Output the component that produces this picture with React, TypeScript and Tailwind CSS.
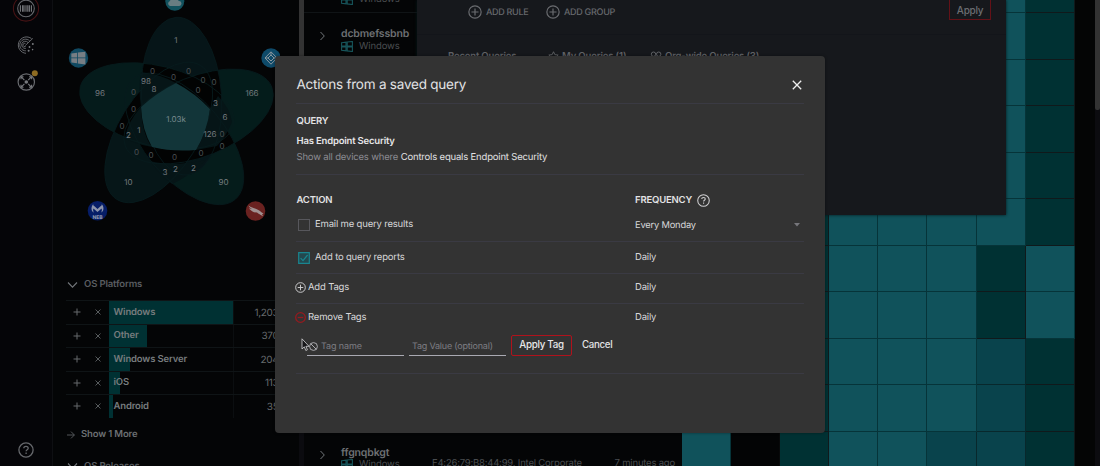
import React from "react";

const shades = {
  T: "bg-[#10525b] border-[#063439]",
  M: "bg-[#09434c] border-[#08282c]",
  D: "bg-[#003133] border-[#10191b]",
  K: "bg-[#030405] border-[#08090a]",
};
type Shade = keyof typeof shades;

const heat = [
  "KKDTTTTD",
  "KKDTTTTD",
  "KKDTTTTD",
  "KKDTTTTD",
  "KKDTTTTD",
  "KKDTTTTD",
  "KKDTTTDT",
  "KKDTTTDT",
  "KKDTTTMD",
  "KKDTTTMD",
  "TKDTTMMD",
];

const devices: Record<number, { name: string; mac: string; seen: string }> = {
  0: { name: "", mac: "", seen: "" },
  1: { name: "dcbmefssbnb", mac: "", seen: "" },
  10: { name: "ffgnqbkgt", mac: "F4:26:79:B8:44:99, Intel Corporate", seen: "7 minutes ago" },
};

const platforms = [
  { name: "Windows", count: "1,203", width: 124.5 },
  { name: "Other", count: "370", width: 38 },
  { name: "Windows Server", count: "204", width: 21 },
  { name: "iOS", count: "113", width: 11.5 },
  { name: "Android", count: "35", width: 4 },
];

function WinOutline() {
  return (
    <svg width="12" height="11" viewBox="0 0 12 11" fill="none" stroke="#17555b" strokeWidth="1.1">
      <path d="M.6 1.8 5 1.2V5H.6zM6.2 1 11.4.5V5H6.2zM.6 6H5v3.8L.6 9.2zM6.2 6h5.2v4.5l-5.2-.6z" />
    </svg>
  );
}

function Chevron({ className }: { className: string }) {
  return (
    <svg className={className} viewBox="0 0 10 6" fill="none" stroke="#72767a" strokeWidth="1.1">
      <path d="M.5.5 5 5.2 9.5.5" />
    </svg>
  );
}

function CirclePlus({ color, size, minus }: { color: string; size: number; minus?: boolean }) {
  return (
    <svg width={size} height={size} viewBox="0 0 13 13" fill="none" stroke={color} strokeWidth={minus ? 1.5 : 1.1}>
      <circle cx="6.5" cy="6.5" r="5.7" />
      <path d={minus ? "M3.2 6.5h6.6" : "M3.2 6.5h6.6M6.5 3.2v6.6"} />
    </svg>
  );
}

function Help({ color, size }: { color: string; size: number }) {
  return (
    <svg width={size} height={size} viewBox="0 0 16 16" fill="none" stroke={color} strokeWidth="1.3">
      <circle cx="8" cy="8" r="7.1" />
      <path d="M5.8 6.3c0-1.3 1-2 2.2-2s2.2.7 2.2 1.9c0 1.5-2.1 1.5-2.1 3.1" />
      <path d="M8.1 10.6v1.5" />
    </svg>
  );
}

function Rail() {
  return (
    <nav className="flex h-[466px] w-[53px] shrink-0 flex-col items-center border-r border-[#0e0f12] bg-[#050508]">
      <svg className="-mt-[6px] shrink-0" width="28" height="28" viewBox="0 0 28 28" fill="none">
        <circle cx="14" cy="14.5" r="12.6" stroke="#461315" strokeWidth="1.1" />
        <circle cx="14" cy="14.5" r="8.3" stroke="#65676b" strokeWidth="1.1" />
        <path d="M8.4 11.3v6.4M10.6 11.3v6.4M12 11.3v6.4M14 11.3v6.4M15.8 11.3v6.4M17.4 11.3v6.4M19.4 11.3v6.4" stroke="#77797d" strokeWidth="1.1" />
      </svg>
      <svg className="mt-[13px] shrink-0" width="20" height="20" viewBox="0 0 20 20" fill="none" stroke="#65676b" strokeWidth="1">
        <path d="M15.5 3.6A8.2 8.2 0 1 0 10 18.3M13.6 5.8a5.8 5.8 0 1 0-3.8 10M12 7.5a3.6 3.6 0 1 0-2.2 5.9M9.5 10.3l7.3-6.9M9.4 8.6a1.6 1.6 0 1 0 .5 2.2" />
        <g fill="#77797d" stroke="none">
          <circle cx="16.8" cy="9" r="1" />
          <circle cx="13.5" cy="12" r=".9" />
          <circle cx="12.6" cy="15.8" r="1" />
          <circle cx="16.6" cy="14.6" r=".8" />
        </g>
      </svg>
      <svg className="mt-[14px] shrink-0" width="26" height="24" viewBox="0 0 26 24" fill="none">
        <circle cx="13.3" cy="13" r="8.2" stroke="#696b6f" strokeWidth="1.2" />
        <circle cx="13.3" cy="13" r="1.8" fill="#77797d" />
        <path d="M8.5 8.2l2.9 2.9M18.1 8.2l-2.9 2.9M8.5 17.8l2.9-2.9M18.1 17.8l-2.9-2.9M8 10.3V7.8h2.5M16.1 7.8h2.5v2.5M8 15.7v2.5h2.5M16.1 18.2h2.5v-2.5" stroke="#77797d" strokeWidth="1.1" />
        <circle cx="21.8" cy="4.2" r="3" fill="#8d6b22" />
      </svg>
      <div className="mt-auto mb-[8px]">
        <Help color="#66686c" size={16} />
      </div>
    </nav>
  );
}

const labels: [number, number, string, boolean?][] = [
  [176, 40, "1", true], [100, 93.5, "96", true], [252, 93.5, "166", true], [128.5, 182, "10", true], [223.5, 182, "90", true],
  [146, 81, "98", true], [154, 89, "8", true], [215.5, 103.5, "3", true], [225, 117.5, "6", true], [210, 134.5, "126", true],
  [139, 130, "1", true], [128.5, 135.5, "2", true], [165, 172.5, "3", true], [175.5, 169, "2", true], [193.5, 168, "2", true],
  [152.5, 71.5, "0"], [173.5, 77.5, "0"], [188.5, 71.5, "0"], [203, 80, "0"], [214, 82.5, "0"], [198, 90.5, "0"],
  [133.5, 92, "0"], [133.5, 109, "0"], [122, 126.5, "0"], [222, 134.5, "0"], [222, 146, "0"], [201, 153.5, "0"],
  [174.5, 157.5, "0"], [151, 155.5, "0"], [136.5, 152, "0"],
];

const petalFills = ["#041c1b", "#051c1b", "#061618", "#051b1b", "#061518"];

function Venn() {
  return (
    <svg className="block shrink-0" width="222" height="232" viewBox="58 0 222 232">
      <defs>
        {petalFills.map((_, i) => (
          <clipPath key={i} id={`petal${i}`}>
            <ellipse cx="198.5" cy="116.5" rx="79" ry="40" transform={`rotate(${i * 72} 176 118) rotate(-22 198.5 116.5)`} />
          </clipPath>
        ))}
      </defs>
      {petalFills.map((fill, i) => (
        <ellipse key={i} cx="198.5" cy="116.5" rx="79" ry="40" fill={fill} transform={`rotate(${i * 72} 176 118) rotate(-22 198.5 116.5)`} />
      ))}
      {petalFills.map((_, i) => (
        <g key={i} clipPath={`url(#petal${i})`}>
          <ellipse cx="198.5" cy="116.5" rx="79" ry="40" fill="#020303" transform={`rotate(${((i + 1) % 5) * 72} 176 118) rotate(-22 198.5 116.5)`} />
        </g>
      ))}
      <path d="M141 72Q160 74 176 83L141 107Q138 88 141 72zM210 109L218 96Q230 108 232 122Q226 137 217 146L196 150Q207 132 210 109zM141 107Q142 134 152 147Q134 144 125 138Q128 121 141 107zM150 161Q172 167 206 160Q190 176 172 184Q158 174 150 161z" fill="#061517" />
      {petalFills.map((_, i) => (
        <ellipse key={i} cx="198.5" cy="116.5" rx="79" ry="40" fill="none" stroke="#071b1d" strokeWidth=".8" transform={`rotate(${i * 72} 176 118) rotate(-22 198.5 116.5)`} />
      ))}
      <path d="M176 83Q195 93 210 109Q207 132 196 150Q172 152 152 147Q142 130 141 107Q156 93 176 83z" fill="#123539" />
      {labels.map(([x, y, t, strong], i) => (
        <text key={i} x={x} y={y + 2.9} textAnchor="middle" className="font-['Inter',sans-serif] text-[8px]" fill={strong ? "#777c80" : "#4b5053"}>
          {t}
        </text>
      ))}
      <text x="176" y="122" textAnchor="middle" className="font-['Inter',sans-serif] text-[8px]" fill="#7b8c90">1.03k</text>
      <circle cx="174.8" cy="1.2" r="9.5" fill="#12525e" />
      <path d="M170 6a2.6 2.6 0 0 1 0-5q1-4 5-3.4 3 .4 3.5 3.4a2.5 2.5 0 0 1 .8 5z" fill="#687d82" />
      <circle cx="78.5" cy="58" r="9.7" fill="#104961" />
      <path d="M71.3 53.5 77 52.8v4.7h-5.7zM77.8 52.6l7.6-.9v5.8h-7.6zM71.3 58.3H77v5l-5.7-.7zM77.8 58.3h7.6v6.2l-7.6-1z" fill="#777e84" />
      <circle cx="271" cy="58" r="9.7" fill="#0e4a69" />
      <path d="M271 51.8l6 6.2-6 6.2-6-6.2zM271 55l3 3-3 3-3-3zM265 58h3M274 58h3M271 52v3" stroke="#8a969e" strokeWidth="1" fill="none" />
      <circle cx="97.5" cy="210.8" r="9.8" fill="#061d67" />
      <path d="M94 212.500c-3-1-3.300-5.500-.8-8.300.2 1.300.5 1.700 1.300 2l3 2.800 3-2.800c.8-.3 1.100-.7 1.300-2 2.500 2.800 2.200 7.300-.8 8.300 1-1.200 1-2.800.6-4.100l-4.100 3.600-4.100-3.600c-.4 1.300-.4 2.900.6 4.100z" fill="#8b93ab" />
      <text x="97.5" y="219" textAnchor="middle" className="font-['Inter',sans-serif] text-[5px] font-extrabold" fill="#8b93ab">NEB</text>
      <circle cx="255.5" cy="211" r="9.8" fill="#6a2220" />
      <path d="M248.500 205.500c4 3 9 3 11.500 5.500 1 1.200 2.500 1.700 3.500 2.500l-1.500.7 1.200 2c-3-1.300-4.600-2.400-6.200-3.700l-3-.3c-2-1-4-2-5-3.900l3 .8c-1.700-1-3-2-3.500-3.600z" fill="#a09090" />
    </svg>
  );
}

function Facets() {
  return (
    <aside className="flex h-[466px] w-[246px] shrink-0 flex-col overflow-hidden bg-[#040506] pl-[5px]">
      <Venn />
      <div className="mt-[43px] flex h-[20px] shrink-0 items-center gap-[6px] pl-[9px]">
        <Chevron className="h-[6px] w-[11px]" />
        <h3 className="pt-px text-[9.5px] font-semibold tracking-[-0.15px] text-[#5a5d61]">OS Platforms</h3>
      </div>
      <div className="mt-[5px] ml-[8px] shrink-0">
        {platforms.map((p) => (
          <div key={p.name} className="flex h-[23.55px] items-center border-t border-[#0f1416]">
            <span className="flex w-[21px] justify-center">
              <svg width="8" height="8" viewBox="0 0 8 8" stroke="#666a6d"><path d="M.5 4h7M4 .5v7" /></svg>
            </span>
            <span className="flex w-[21.5px] justify-center">
              <svg width="6" height="6" viewBox="0 0 6 6" stroke="#606467" strokeWidth=".9"><path d="M.5.5l5 5M5.500.5l-5 5" /></svg>
            </span>
            <span className="grid h-full w-[125px] items-center border-r border-[#0b0e10]">
              <span className="col-start-1 row-start-1 h-full bg-[#003133]" style={{ width: p.width }} />
              <span className="col-start-1 row-start-1 pt-px pl-[5px] text-[9.5px] font-semibold tracking-[-0.15px] whitespace-nowrap text-[#777c7e]">{p.name}</span>
            </span>
            <span className="w-[45px] pt-[2px] text-right text-[10px] tracking-[-0.3px] text-[#666a6d]">{p.count}</span>
          </div>
        ))}
      </div>
      <div className="mt-[7px] flex h-[20px] shrink-0 items-center gap-[6px] pl-[9px]">
        <svg width="8" height="8" viewBox="0 0 8 8" fill="none" stroke="#5c6063" strokeWidth=".9"><path d="M0 4h7.300M4 .6 7.400 4 4 7.400" /></svg>
        <span className="text-[9.5px] font-semibold tracking-[-0.15px] text-[#6c7073]">Show 1 More</span>
      </div>
      <div className="mt-[11px] flex h-[20px] shrink-0 items-center gap-[6px] pl-[9px]">
        <Chevron className="h-[6px] w-[11px]" />
        <h3 className="pt-[2px] text-[9.5px] font-semibold tracking-[-0.15px] text-[#5a5d61]">OS Releases</h3>
      </div>
    </aside>
  );
}

function DeviceTable() {
  return (
    <main className="-mt-[33.5px] flex w-[771px] shrink-0 flex-col">
      {heat.map((line, r) => {
        const d = devices[r];
        return (
          <div key={r} className="flex h-[46.5px] shrink-0">
            <div className="flex w-[378px] shrink-0 border-b border-[#101416] pl-[16px]">
              {d && (
                <>
                  <svg className="mt-[18px] shrink-0" width="5" height="10" viewBox="0 0 5 10" fill="none" stroke="#72767a"><path d="M.5 1 4.300 5 .5 9" /></svg>
                  <div className="ml-[16px] w-[91px] shrink-0 pt-[14px]">
                    <div className="h-[13px] text-[10.5px] leading-[13px] font-semibold tracking-[-0.15px] text-[#6d7073]">{d.name}</div>
                    <div className="flex h-[12px] items-center gap-[6px] text-[9.5px] leading-[12px] tracking-[-0.1px] text-[#4a4d50]">
                      <WinOutline />
                      <span className="pt-px">Windows</span>
                    </div>
                  </div>
                  <div className="flex w-[243px] shrink-0 justify-between pt-[26px] text-[9.5px] leading-[12px] tracking-[-0.2px] whitespace-nowrap text-[#4a4d50]">
                    <span>{d.mac}</span>
                    <span>{d.seen}</span>
                  </div>
                </>
              )}
            </div>
            {line.split("").map((s, c) => (
              <div key={c} className={"w-[49.1px] shrink-0 border-r border-b " + shades[s as Shade]} />
            ))}
          </div>
        );
      })}
    </main>
  );
}

function QueryWizard() {
  return (
    <section className="absolute top-0 left-[417px] h-[214.5px] w-[589px] overflow-hidden bg-[#16181c] shadow-[0_0_3px_#03181b]">
      <div className="flex h-[35px] items-start border-b border-[#13151a] pl-[51px] text-[9px] font-medium tracking-[-0.3px] text-[#66686c]">
        <div className="flex h-[24px] w-[78px] items-center gap-[4px]">
          <CirclePlus color="#6a6c70" size={14} />
          <span className="pt-[2px]">ADD RULE</span>
        </div>
        <div className="flex h-[24px] items-center gap-[4px]">
          <CirclePlus color="#6a6c70" size={14} />
          <span className="pt-[2px]">ADD GROUP</span>
        </div>
        <button className="-mt-[2px] mr-[15px] ml-auto h-[22px] w-[42px] border border-[#641117] pt-[2px] text-[10px] text-[#6c6e72]">Apply</button>
      </div>
      <div className="flex h-[42px] items-center pl-[31px] text-[9.5px] font-semibold tracking-[-0.15px] text-[#606266]">
        <span className="w-[100px] pt-[2px]">Recent Queries</span>
        <svg width="11" height="11" viewBox="0 0 12 12" fill="none" stroke="#606266"><path d="M6 .8 7.500 4l3.600.4-2.700 2.400.8 3.600L6 8.600l-3.200 1.800.8-3.600L.9 4.400 4.500 4z" /></svg>
        <span className="ml-[3px] w-[88px] pt-[2px]">My Queries (1)</span>
        <svg width="12" height="11" viewBox="0 0 12 11" fill="none" stroke="#606266"><circle cx="3.5" cy="3.2" r="2.2" /><circle cx="8.7" cy="3.2" r="2.2" /><path d="M.5 10c0-5 6-5 6 0M7 7c2-1.300 4.500 0 4.500 3" /></svg>
        <span className="ml-[3px] pt-[2px]">Org-wide Queries (3)</span>
      </div>
    </section>
  );
}

function Modal() {
  const line = "border-b border-[#3a3a43]";
  return (
    <div role="dialog" className="absolute top-[56px] left-[275px] flex h-[377px] w-[550px] flex-col rounded-[4px] bg-[#333333] px-[21px] text-[9.5px] tracking-[-0.18px] text-[#d8d8da] shadow-[0_0_3px_rgba(0,0,0,0.4)]">
      <header className={"flex h-[48px] shrink-0 items-center justify-between pt-[11px] " + line}>
        <h2 className="pt-px pl-[0.5px] text-[13.5px] tracking-[-0.22px] text-[#e2e2e4]">Actions from a saved query</h2>
        <svg className="mr-[2.5px]" width="10" height="10" viewBox="0 0 10 10" stroke="#f0f0f0" strokeWidth="1.3"><path d="M.8.8l8.400 8.400M9.200.8.8 9.200" /></svg>
      </header>
      <div className={"h-[71px] shrink-0 pt-[10px] pl-[0.5px] " + line}>
        <h4 className="h-[15px] leading-[15px] font-semibold text-[#e2e2e4]">QUERY</h4>
        <div className="mt-[5px] h-[15px] leading-[15px] font-semibold text-[#e6e6e8]">Has Endpoint Security</div>
        <div className="mt-[1px] h-[15px] leading-[15px] whitespace-nowrap text-[#8b8b92]">
          Show all devices where <span className="text-[#e2e2e4]">Controls equals Endpoint Security</span>
        </div>
      </div>
      <div className="flex h-[34px] shrink-0 items-center pt-[16px] font-semibold text-[#e2e2e4]">
        <span className="w-[339px] pt-[2px] pl-[0.5px]">ACTION</span>
        <span className="w-[62px] pt-[2px]">FREQUENCY</span>
        <Help color="#d0d0d2" size={13} />
      </div>
      <div className={"flex h-[33px] shrink-0 items-center " + line}>
        <span className="ml-[2px] h-[12px] w-[12px] border border-[#57575c]" />
        <span className="w-[325px] pt-px pl-[5px]">Email me query results</span>
        <span className="pt-px text-[9.3px]">Every Monday</span>
        <svg className="mr-[4px] ml-auto" width="6" height="4" viewBox="0 0 6 4" fill="#77777c"><path d="M0 0h6L3 3.600z" /></svg>
      </div>
      <div className={"flex h-[32px] shrink-0 items-center " + line}>
        <svg className="ml-[2px]" width="12" height="12" viewBox="0 0 12 12" fill="#23484e" stroke="#19858f" strokeWidth="1.2"><path d="M.7.7h10.600v10.600H.7z" /><path d="M2.600 6.200l2.400 2.400L9.600 3" fill="none" /></svg>
        <span className="w-[325px] pt-px pl-[5px]">Add to query reports</span>
        <span className="pt-px">Daily</span>
      </div>
      <div className={"flex h-[30px] shrink-0 items-center pb-[2px] " + line}>
        <span className="-ml-px"><CirclePlus color="#d3d3d5" size={11} /></span>
        <span className="w-[329px] pt-px pl-[2px]">Add Tags</span>
        <span className="pt-px">Daily</span>
      </div>
      <div className={"h-[70px] shrink-0 " + line}>
        <div className="flex h-[27px] items-center">
          <span className="-ml-px"><CirclePlus color="#961a1f" size={11} minus /></span>
          <span className="w-[329px] pt-px pl-[2px]">Remove Tags</span>
          <span className="pt-px">Daily</span>
        </div>
        <div className="flex h-[29px] items-center pl-[11px]">
          <div className="mt-[2px] flex h-[19px] w-[97px] items-center border-b border-[#a9a9b2] text-[9px] tracking-[-0.1px] text-[#7d7d83]">
            <svg className="ml-[2px]" width="9" height="9" viewBox="0 0 9 9" fill="none" stroke="#b9b9bd" strokeWidth=".9"><circle cx="4.5" cy="4.5" r="3.9" /><path d="M1.800 1.800l5.400 5.400" /></svg>
            <span className="ml-[3px] pt-[2px]">Tag name</span>
          </div>
          <div className="mt-[2px] ml-[5px] flex h-[19px] w-[97px] items-center border-b border-[#a9a9b2] pt-[2px] pl-[3px] text-[9px] tracking-[-0.2px] whitespace-nowrap text-[#7d7d83]">Tag Value (optional)</div>
          <button className="ml-[5px] h-[21px] w-[61px] rounded-[2px] border border-[#b0121c] text-[9.8px] font-medium tracking-[-0.3px] whitespace-nowrap text-[#e8e8ea]">Apply Tag</button>
          <button className="ml-[10px] text-[9.7px] font-medium tracking-[-0.3px] text-[#e2e2e4]">Cancel</button>
        </div>
      </div>
      <svg className="absolute top-[282px] left-[26px]" width="9" height="14" viewBox="0 0 9 14"><path d="M1 .8v10.200l2.300-2.200 1.500 3.700 1.600-.7-1.500-3.500h3.100z" fill="#17171a" stroke="#d8d8da" strokeWidth=".8" /></svg>
    </div>
  );
}

export default function App() {
  return (
    <div className="relative flex h-[466px] w-[1100px] overflow-hidden bg-[#040506] font-['Inter',sans-serif] [text-rendering:geometricPrecision]">
      <Rail />
      <Facets />
      <div className="h-[466px] w-[5px] shrink-0 bg-[#0b0b0f]">
        <div className="h-[300px] bg-[#333333]" />
      </div>
      <DeviceTable />
      <div className="w-[20px] shrink-0 bg-[#040505]" />
      <div className="h-[466px] w-[5px] shrink-0 bg-[#0c0c10]">
        <div className="h-[110px] rounded-b-[2px] bg-[#333333]" />
      </div>
      <QueryWizard />
      <Modal />
    </div>
  );
}
